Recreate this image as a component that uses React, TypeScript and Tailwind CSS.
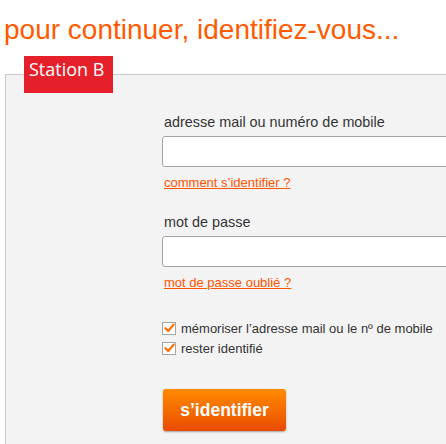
import React from "react";

const sans = { fontFamily: '"Liberation Sans", Arial, sans-serif' };

const Check = ({ label }: { label: string }) => {
  return (
    <label className="flex h-[20px] items-center gap-[5px] text-[13px] leading-[15px] text-[#333]">
      <span className="flex h-[13px] w-[14px] items-center justify-center border border-[#a5a5a5] bg-white">
        <svg width="11" height="10" viewBox="0 0 11 10">
          <path
            d="M1.5 5.2 L4.2 8 L9.6 1.6"
            fill="none"
            stroke="#ff6a00"
            strokeWidth="2.2"
            strokeLinecap="round"
            strokeLinejoin="round"
          />
        </svg>
      </span>
      <span>{label}</span>
    </label>
  );
};

export default function App() {
  return (
    <div className="h-[444px] w-[446px] overflow-hidden bg-white" style={sans}>
      <h1 className="pl-[4px] pt-[14px] text-[28px] leading-[32px] font-normal text-[#ff5a00]">
        pour continuer, identifiez-vous...
      </h1>

      <fieldset className="ml-[5px] mt-[10px] w-[480px] border border-[#c9c9c9] bg-[#f3f3f3] pb-[40px]">
        <legend
          className="ml-[18px] h-[37px] w-[89px] bg-[#e5202a] px-[5px] pt-[1px] text-[18px] leading-[24px] text-white"
          style={{ fontFamily: '"Open Sans", sans-serif' }}
        >
          Station B
        </legend>

        <div className="flex flex-col pl-[156px] pt-[21px]">
          <p className="pl-[2px] text-[14.4px] leading-[16px] text-[#333]">
            adresse mail ou numéro de mobile
          </p>
          <input
            type="text"
            className="mt-[6px] h-[31px] w-[300px] rounded-[3px] border border-[#a3a3a3] bg-white"
          />
          <a
            href="#"
            className="mt-[8px] self-start pl-[2px] text-[13px] leading-[15px] text-[#ff5400] underline"
          >
            comment s’identifier ?
          </a>

          <p className="mt-[24px] pl-[2px] text-[14.4px] leading-[16px] text-[#333]">
            mot de passe
          </p>
          <input
            type="password"
            className="mt-[6px] h-[31px] w-[300px] rounded-[3px] border border-[#a3a3a3] bg-white"
          />
          <a
            href="#"
            className="mt-[8px] self-start pl-[2px] text-[13px] leading-[15px] text-[#ff5400] underline"
          >
            mot de passe oublié ?
          </a>

          <div className="mt-[28px] flex flex-col">
            <Check label="mémoriser l’adresse mail ou le nº de mobile" />
            <Check label="rester identifié" />
          </div>

          <button
            className="ml-[1px] mt-[31px] h-[42px] w-[123px] rounded-[3px] bg-gradient-to-b from-[#ff8a00] to-[#e94a00] text-[17.5px] font-bold text-white shadow-[0_1px_2px_rgba(0,0,0,0.35)]"
          >
            s’identifier
          </button>
        </div>
      </fieldset>
    </div>
  );
}
